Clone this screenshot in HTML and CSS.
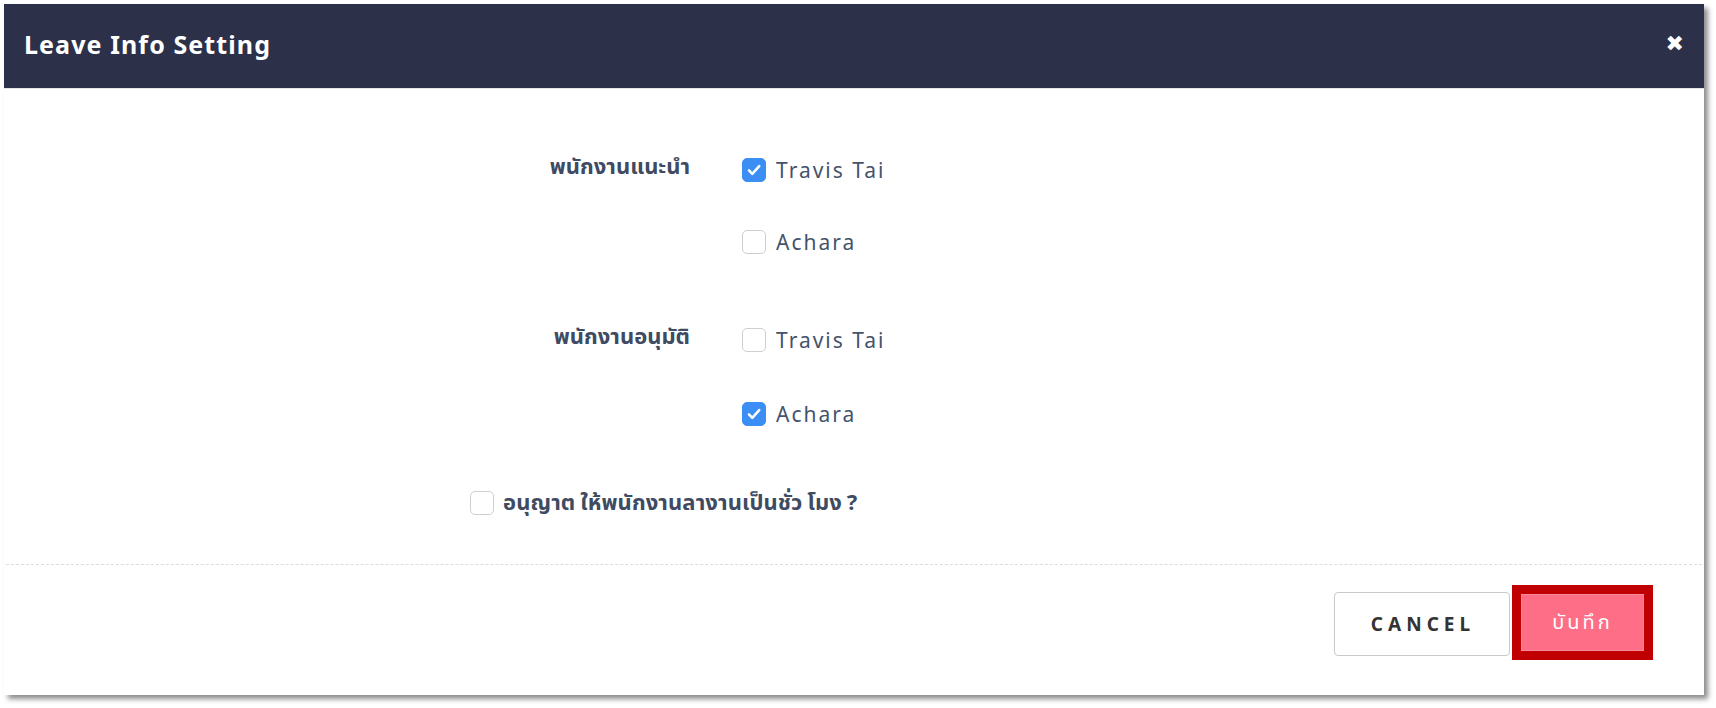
FILE: index.html
```html
<!DOCTYPE html>
<html lang="th">
<head>
<meta charset="utf-8">
<title>Leave Info Setting</title>
<link rel="stylesheet" href="styles.css">
</head>
<body>
<div class="modal">
  <div class="modal-header">
    <h1 class="modal-title">Leave Info Setting</h1>
    <span class="close">&#x2716;</span>
  </div>
  <div class="modal-body">
    <div class="form-group group-1">
      <div class="label">พนักงานแนะนำ</div>
      <div class="options">
        <label class="option"><span class="check checked"><svg viewBox="0 0 24 24"><path d="M6.5 12.5l3.6 3.8 7.6-8.6" fill="none" stroke="#fff" stroke-width="2.8" stroke-linecap="round" stroke-linejoin="round"/></svg></span><span class="opt-text">Travis Tai</span></label>
        <label class="option"><span class="check"></span><span class="opt-text">Achara</span></label>
      </div>
    </div>
    <div class="form-group group-2">
      <div class="label">พนักงานอนุมัติ</div>
      <div class="options">
        <label class="option"><span class="check"></span><span class="opt-text">Travis Tai</span></label>
        <label class="option"><span class="check checked"><svg viewBox="0 0 24 24"><path d="M6.5 12.5l3.6 3.8 7.6-8.6" fill="none" stroke="#fff" stroke-width="2.8" stroke-linecap="round" stroke-linejoin="round"/></svg></span><span class="opt-text">Achara</span></label>
      </div>
    </div>
    <label class="option hourly"><span class="check"></span><span class="hourly-text">อนุญาต ให้พนักงานลางานเป็นชั่ว โมง ?</span></label>
  </div>
  <div class="modal-footer">
    <button class="btn btn-cancel">CANCEL</button>
    <button class="btn btn-save">บันทึก</button>
  </div>
</div>
</body>
</html>
```
FILE: styles.css
```css
* { box-sizing: border-box; }
html, body { margin: 0; padding: 0; background: #fff; }
body {
  font-family: "Noto Sans", "Noto Sans Thai", "Tlwg Typist", "Garuda", "Loma", sans-serif;
  width: 1716px;
  height: 708px;
  overflow: hidden;
}
.modal {
  margin: 4px 0 0 4px;
  width: 1700px;
  height: 691px;
  background: #fff;
  box-shadow: 4px 4px 5px rgba(0,0,0,0.45);
  display: flex;
  flex-direction: column;
}
.modal-header {
  height: 85px;
  background: #2c3149;
  border-bottom: 1px solid #e6e6e6;
  display: flex;
  align-items: center;
  justify-content: space-between;
  padding: 0 20px 0 20px;
}
.modal-title {
  margin: -5px 0 0 0;
  color: #fff;
  font-size: 25px;
  font-weight: 700;
  letter-spacing: 1.1px;
}
.close {
  color: #fff;
  font-size: 22px;
  font-family: "DejaVu Sans", sans-serif;
  margin-top: -6px;
}
.modal-body {
  flex: 1;
  padding-top: 69px;
  padding-left: 0;
}
.form-group {
  display: grid;
  grid-template-columns: 686px 1fr;
  column-gap: 52px;
}
.group-2 { margin-top: 74px; }
.label {
  text-align: right;
  color: #3e4b62;
  font-weight: 700;
  font-size: 22px;
  line-height: 24px;
  margin-top: -5px;
}
.options {
  display: flex;
  flex-direction: column;
  gap: 48px;
}
.group-2 .options { gap: 50px; }
.option {
  display: flex;
  align-items: center;
  height: 24px;
}
.check {
  width: 24px;
  height: 24px;
  border: 1px solid #cfcfcf;
  border-radius: 5px;
  background: #fff;
  flex: none;
  display: flex;
  align-items: center;
  justify-content: center;
}
.check.checked {
  background: #3b8ef3;
  border-color: #3b8ef3;
}
.check svg { width: 22px; height: 22px; }
.opt-text {
  margin-left: 10px;
  color: #44536b;
  font-size: 21px;
  letter-spacing: 2px;
}
.hourly {
  margin: 65px 0 0 466px;
}
.hourly-text {
  margin-left: 9px;
  color: #3e4b62;
  font-weight: 700;
  font-size: 22px;
  letter-spacing: 0.1px;
  word-spacing: -1px;
}
.modal-footer {
  margin: 0 2px;
  border-top: 1px dashed #dcdcdc;
  height: 131px;
  display: flex;
  justify-content: flex-end;
  align-items: flex-start;
  padding: 20px 49px 0 0;
}
.btn {
  font-family: inherit;
  cursor: pointer;
}
.btn-cancel {
  margin-top: 7px;
  width: 176px;
  height: 64px;
  background: #fff;
  border: 1px solid #c9c9c9;
  border-radius: 4px;
  color: #333;
  font-size: 19px;
  font-weight: 700;
  letter-spacing: 5px;
  padding-left: 8px;
}
.btn-save {
  margin-left: 2px;
  width: 141px;
  height: 75px;
  background: #ff6e87;
  border: 9px solid #c00000;
  box-shadow: inset 0 0 0 1px #f58a9c;
  color: #fff;
  font-size: 20px;
  letter-spacing: 3px;
}
```
